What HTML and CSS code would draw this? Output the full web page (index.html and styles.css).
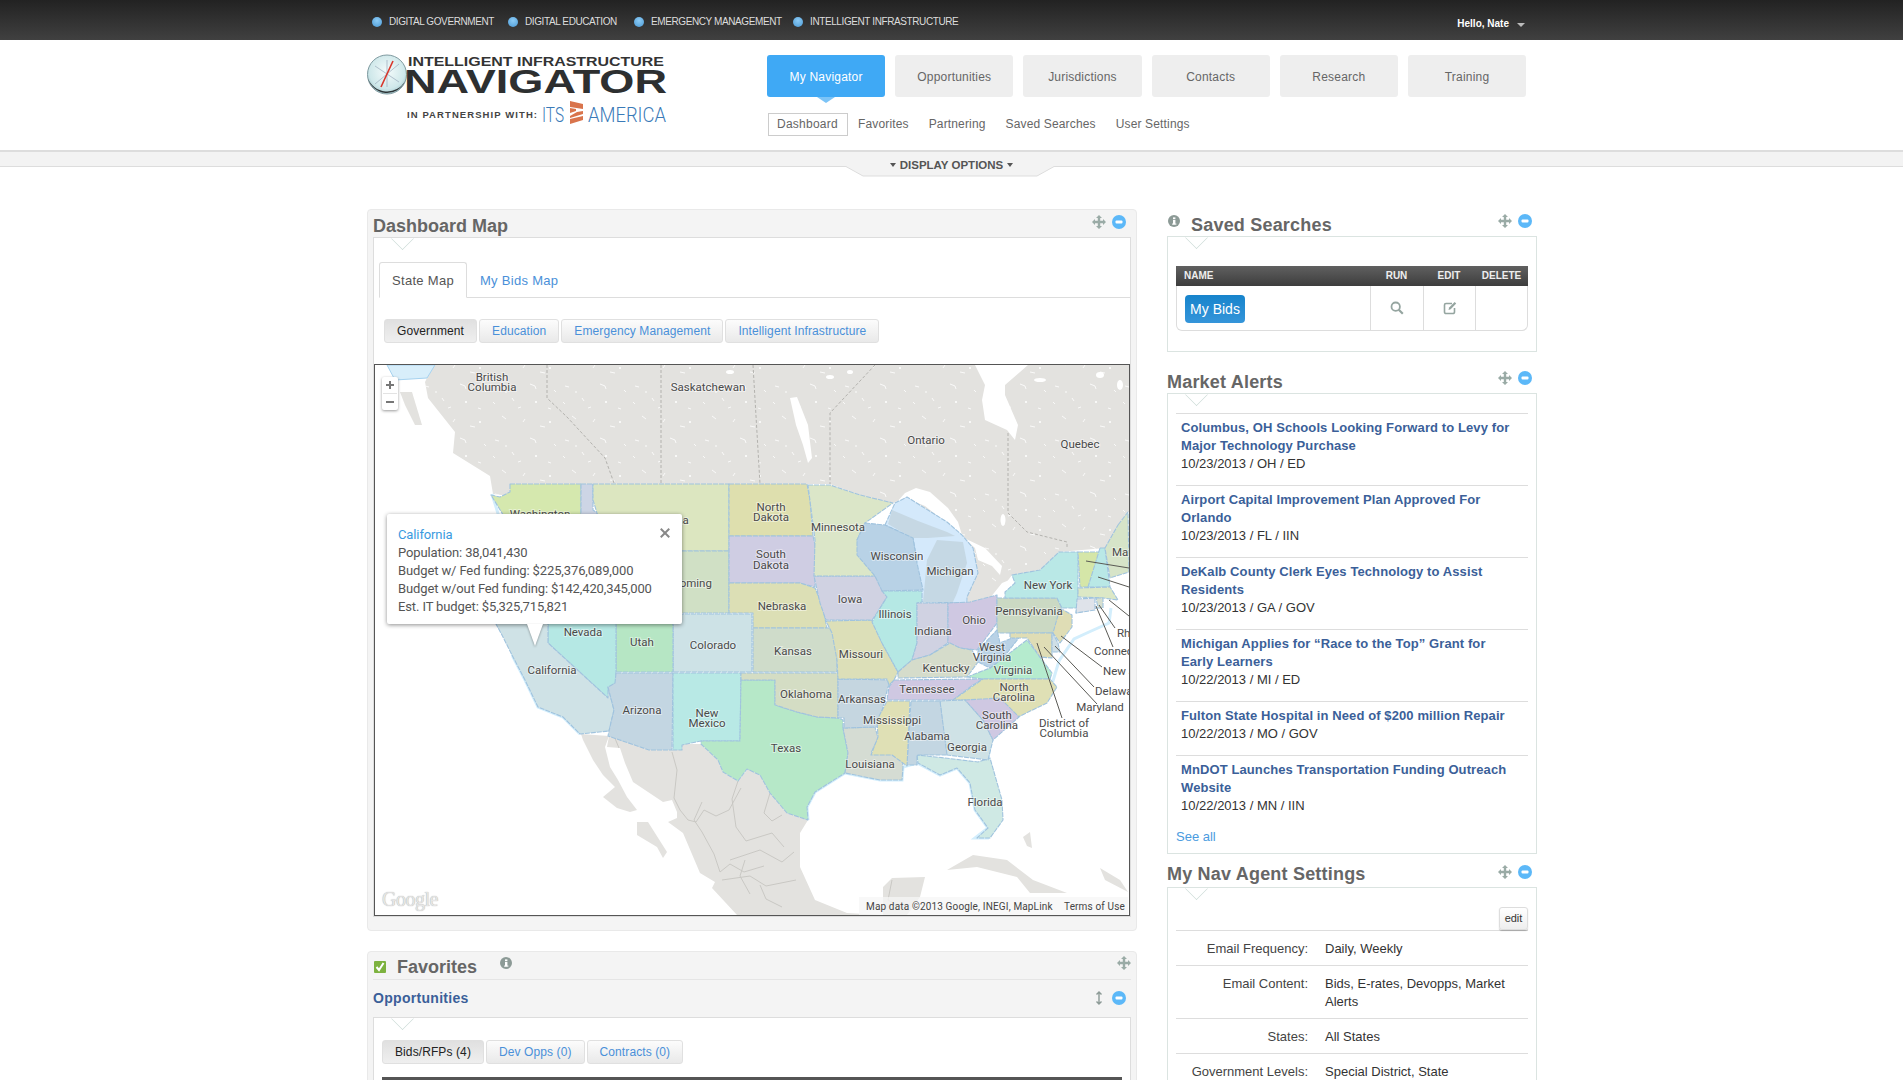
FILE: index.html
```html
<!DOCTYPE html>
<html lang="en">
<head>
<meta charset="utf-8">
<title>Intelligent Infrastructure Navigator</title>
<link rel="stylesheet" href="styles.css">
</head>
<body>
<svg class="defs" width="0" height="0">
  <symbol id="i-move" viewBox="0 0 14 14"><path d="M7 0l3 3H8.2v2.8H11V4l3 3-3 3V8.2H8.2V11H10l-3 3-3-3h1.8V8.2H3V10L0 7l3-3v1.8h2.8V3H4z" fill="#9aaba6"/></symbol>
  <symbol id="i-minus" viewBox="0 0 14 14"><circle cx="7" cy="7" r="7" fill="#5cb8f8"/><rect x="3.5" y="5.5" width="7" height="3" rx="1" fill="#fff"/></symbol>
  <symbol id="i-info" viewBox="0 0 14 14"><circle cx="7" cy="7" r="6" fill="#8c9a96"/><rect x="6" y="6" width="2.4" height="4.4" fill="#fff"/><rect x="6" y="3.4" width="2.4" height="1.8" fill="#fff"/><rect x="5" y="9.6" width="4.4" height="1" fill="#fff"/></symbol>
</svg>

<div class="topbar">
  <div class="topbar-in">
    <ul class="sectors">
      <li class="s1">Digital Government</li>
      <li class="s2">Digital Education</li>
      <li class="s3">Emergency Management</li>
      <li class="s4">Intelligent Infrastructure</li>
    </ul>
    <div class="hello">Hello, Nate<span class="caret"></span></div>
  </div>
</div>

<header class="head">
  <div class="logo">
    <svg width="310" height="80" viewBox="366 52 310 80">
      <defs><radialGradient id="gl" cx=".5" cy=".42" r=".6"><stop offset="0" stop-color="#f4fbfb"/><stop offset=".75" stop-color="#cfe8ea"/><stop offset="1" stop-color="#9fc4ca"/></radialGradient></defs>
      <circle cx="387" cy="74.500" r="19.500" fill="url(#gl)" stroke="#7f9aa0" stroke-width="1"/>
      <path d="M368 78a19.500 19.500 0 0 0 37 3a20 19 0 0 1-37-3z" fill="#2d3436"/>
      <path d="M375 84l24-20M387 60v27M375 66l24 16" stroke="#9ab" stroke-width=".7" fill="none"/>
      <path d="M381 87l12-26" stroke="#d8352a" stroke-width="1.600" fill="none"/>
      <text x="408" y="65.500" class="lg-a" textLength="256" lengthAdjust="spacingAndGlyphs">INTELLIGENT INFRASTRUCTURE</text>
      <text x="404" y="93" class="lg-b" textLength="263" lengthAdjust="spacingAndGlyphs">NAVIGATOR</text>
      <text x="407" y="117.500" class="lg-c" textLength="130" lengthAdjust="spacing">IN PARTNERSHIP WITH:</text>
      <text x="542" y="122" class="lg-d" textLength="22" lengthAdjust="spacingAndGlyphs">ITS</text>
      <path d="M570 101l13 3v5l-13-2zM570 108l6 1v2l-6 2zM577 112l6-1v3l-13 4v-2zM570 119l13-3v4l-13 4z" fill="#d9744c"/>
      <text x="588" y="122" class="lg-d" textLength="78" lengthAdjust="spacingAndGlyphs">AMERICA</text>
    </svg>
  </div>
  <nav class="nav">
    <ul class="main-tabs">
      <li class="on">My Navigator</li>
      <li>Opportunities</li>
      <li>Jurisdictions</li>
      <li>Contacts</li>
      <li>Research</li>
      <li>Training</li>
    </ul>
    <ul class="sub-tabs">
      <li class="on">Dashboard</li>
      <li>Favorites</li>
      <li>Partnering</li>
      <li>Saved Searches</li>
      <li>User Settings</li>
    </ul>
  </nav>
</header>

<div class="band">
  <svg class="band-tab" width="212" height="12" viewBox="0 0 212 12"><path d="M1 0l18 10h174L211 0" fill="#f3f3f3" stroke="#ddd"/></svg>
  <div class="band-label"><span class="tri"></span>DISPLAY OPTIONS<span class="tri"></span></div>
</div>

<main class="page">
  <section class="col-left">
    <div class="panel">
      <div class="phead">
        <h2 class="ptitle">Dashboard Map</h2>
        <div class="ptools"><svg class="ic"><use href="#i-move"/></svg><svg class="ic"><use href="#i-minus"/></svg></div>
      </div>
      <div class="box notch">
        <ul class="tabs">
          <li class="on">State Map</li>
          <li>My Bids Map</li>
        </ul>
        <ul class="pills">
          <li class="on">Government</li>
          <li>Education</li>
          <li>Emergency Management</li>
          <li>Intelligent Infrastructure</li>
        </ul>
        <div class="map">
          <svg class="map-svg" width="754" height="550" viewBox="375 365 754 550">
            <defs>
              <pattern id="speck" width="70" height="54" patternUnits="userSpaceOnUse">
                <path d="M5 8l4 1M22 20l2 3M40 6l5 2 1 3M58 30l3 1M12 38l4 3M33 44l2-3M50 48l5 1M64 12l2 2M28 30l3-1M3 24l2 2" stroke="#fff" stroke-width=".8" fill="none"/>
                <circle cx="46" cy="24" r="1" fill="#fff"/><circle cx="16" cy="14" r=".8" fill="#fff"/><circle cx="60" cy="44" r="1" fill="#fff"/>
              </pattern>
            </defs>
            <rect x="375" y="365" width="754" height="550" fill="#fff"/>
            <g fill="#e3e2df">
              <polygon points="435,365 1131,365 1131,512 1128,512 1118,525 1105,548 1059,552 1040,570 1012,575 997,595 968,603 967,597 978,573 973,548 962,535 947,522 907,497 893,503 860,495 830,484 510,484 510,496 493,494 490,476 453,453 455,432 428,398 425,382 427,378"/>
              <polygon points="400,392 412,392 422,425 415,425 405,405"/>
              <polygon points="581,734 609,736 605,747 610,767 618,780 627,797 637,810 630,812 617,808 603,797 615,787 603,775 593,760 583,740"/>
              <polygon points="637,822 648,822 667,852 663,858 657,847 637,835"/>
              <polygon points="609,736 649,750 682,750 682,744 701,744 718,760 723,772 738,781 748,769 760,775 770,793 787,813 808,820 800,833 800,867 815,900 847,913 883,915 883,887 892,878 925,877 920,897 907,915 737,915 712,888 715,882 700,873 683,833 668,822 677,818 677,812 672,800 663,802 633,782 625,763 620,748 607,747"/>
              <polygon points="947,870 973,855 1007,860 1033,880 1067,893 1030,893 1017,877 977,867"/>
              <polygon points="1023,837 1030,832 1032,848 1027,846"/>
              <polygon points="1100,868 1120,880 1128,892 1105,880"/>
            </g>
            <polygon points="435,365 1131,365 1131,512 1128,512 1118,525 1105,548 1059,552 1040,570 1012,575 997,595 968,603 967,597 978,573 973,548 962,535 947,522 907,497 893,503 860,495 830,484 510,484 510,496 493,494 490,476 453,453 455,432 428,398 425,382 427,378" fill="url(#speck)"/>
            <g fill="#fff">
              <polygon points="975,365 1028,365 1005,385 1005,395 1018,425 1015,440 1007,430 985,420 982,400 985,385"/>
              <polygon points="790,398 797,397 808,425 812,458 808,463 803,445 796,425"/>
              <polygon points="896,503 905,493 916,488 930,492 948,508 958,522 962,535 945,522 925,506 908,499"/>
              <polygon points="964,538 985,548 1002,566 1000,575 992,566 978,560 975,548"/>
              <polygon points="1002,583 1024,574 1030,570 1014,583 998,596 990,598"/>
              <polygon points="906,560 915,545 921,545 922,590 913,590"/>
              <ellipse cx="1003" cy="520" rx="2.500" ry="6"/><ellipse cx="730" cy="372" rx="4" ry="2"/><ellipse cx="830" cy="377" rx="4" ry="2"/><ellipse cx="850" cy="372" rx="3" ry="2"/><ellipse cx="1040" cy="380" rx="6" ry="2"/><ellipse cx="1100" cy="375" rx="4" ry="3"/><ellipse cx="1120" cy="385" rx="3" ry="5"/>
            </g>
            <g fill="none" stroke="#b3b2ae" stroke-width="1" stroke-dasharray="3 2">
              <path d="M547 365v33l20 19 38 41 9 25"/>
              <path d="M661 365v119"/>
              <path d="M753 365l7 119"/>
              <path d="M875 365l-45 48v71"/>
              <path d="M1008 433v80l19 19 40 10v6"/>
            </g>
            <g fill="none" stroke="#c6c5c1" stroke-width=".9">
              <path d="M672 752l5 18-3 28 6 12 8 10 8 2 8-12 12 6 13-6 12-22M702 802l-8 18 8 12 12 22 6 18 10-8 14 8 20-6M738 781l-6 18 4 28 10 14 26-8 12 14M770 793l-6 20 8 8 10-6M730 860l30-10 22 12 12-10M722 880l28-4 16 10 30-6M892 880l-4 20 14 8M614 736l5 12M760 885l6 14 16 8M745 860l-5 16 10 18"/>
            </g>
            <path d="M492 494l8 26 5 100 8 37 12 23 13 27 25 10 17 17M845 773l35 7h22l1-13 14-4 23 12 17-7 13 15 5 27 13 18-13 10 13 0 13-18-1-20-12-42 3-18 26-23 29-20 7-16 6-20 15-22 15-7 20-9 2-15M808 820l-1-13 8-15 30-19" fill="none" stroke="#d3eefc" stroke-width="3"/>
            <polygon points="387,365 435,365 427,378 395,380" fill="#d8eefa" stroke="#a6d2ef"/>
            <g class="states" stroke="#a0c3de" stroke-width="1.100" stroke-linejoin="round" stroke-dasharray="5 1">
              <polygon fill="#d5e8ae" points="510,484 581,484 581,525 520,525 505,518 491,495 500,497 510,492"/>
              <polygon fill="#cdd5e5" points="581,484 593,484 593,510 597,513 610,560 610,620 581,620"/>
              <polygon fill="#dce6c0" points="593,484 729,484 729,551 680,551 610,545 597,513 593,500"/>
              <polygon fill="#d0e0c5" points="640,551 729,551 729,613 640,613"/>
              <polygon fill="#dedfae" points="729,484 807,484 810,500 813,536 729,536"/>
              <polygon fill="#cfcde3" points="729,536 813,536 815,545 815,587 800,583 729,583"/>
              <polygon fill="#dcdfb5" points="729,583 800,583 815,588 822,605 827,628 753,628 753,613 729,613"/>
              <polygon fill="#cfdcca" points="753,628 832,628 837,645 837,672 753,672"/>
              <polygon fill="#cde2e6" points="673,614 752,614 752,672 673,672"/>
              <polygon fill="#b6e6c4" points="616,600 673,600 673,672 616,672"/>
              <polygon fill="#b5e8e4" points="548,600 616,600 616,683 612,685 608,698 548,643"/>
              <polygon fill="#cfe2e6" points="496,600 548,600 548,643 608,698 608,687 614,710 609,731 580,734 563,717 538,707 525,680 513,657 503,637 496,624"/>
              <polygon fill="#c3d6e2" points="616,673 673,673 672,750 649,750 608,736 609,731 614,710 608,687 615,683"/>
              <polygon fill="#b8e9e5" points="673,673 741,673 740,741 701,741 682,745 682,750 673,750"/>
              <polygon fill="#b6e8c8" points="741,680 775,680 775,705 797,712 817,717 838,718 843,720 843,728 848,753 845,773 815,792 807,807 808,820 787,813 770,793 760,775 747,769 738,781 723,772 718,760 701,744 701,741 740,741"/>
              <polygon fill="#d4ddc4" points="741,673 838,673 838,718 817,717 797,712 775,705 775,680 741,680"/>
              <polygon fill="#d5dcd3" points="843,728 875,727 878,738 871,753 902,755 903,767 902,780 880,780 845,773 848,753"/>
              <polygon fill="#c5d6e0" points="838,679 893,680 888,687 883,707 877,727 844,728 844,718 838,718"/>
              <polygon fill="#dcdfb8" points="826,621 872,620 882,643 898,672 894,680 889,685 887,679 838,679 837,660 832,633"/>
              <polygon fill="#d0d2e2" points="814,576 875,576 887,597 877,613 872,620 826,620 820,603"/>
              <polygon fill="#dbe6c8" points="808,485 830,485 860,495 893,503 865,523 857,540 875,576 814,576 815,540"/>
              <polygon fill="#d4e9fb" points="885,525 895,503 907,497 947,522 962,535 973,548 978,573 967,597 967,603 922,602 913,580 917,560 913,538"/>
              <polygon fill="#c6d8e4" stroke="none" points="888,524 892,510 918,521 947,532 955,536 928,538 912,538"/>
              <polygon fill="#c5d8e4" stroke="none" points="927,560 937,540 963,542 967,563 957,593 953,602 923,602"/>
              <polygon fill="#b8d2e6" points="865,523 885,525 913,538 917,563 923,590 882,591 875,576 857,555 857,540"/>
              <polygon fill="#b5e8e4" points="882,591 922,591 922,602 917,603 917,643 912,660 898,672 882,643 872,622 877,613 887,597"/>
              <polygon fill="#d0d2e2" points="917,603 948,603 948,643 930,655 912,660 917,643"/>
              <polygon fill="#cfc8e2" points="948,603 970,602 997,595 997,623 977,650 960,648 948,643"/>
              <polygon fill="#cbd9c3" points="997,598 1057,598 1062,608 1060,620 1058,633 997,633"/>
              <polygon fill="#dfddb5" points="1060,608 1072,615 1072,627 1060,643 1053,633"/>
              <polygon fill="#b9e8e6" points="1012,575 1040,570 1059,552 1078,552 1078,597 1076,613 1097,608 1062,608 1057,598 1005,598 1005,592 1015,583"/>
              <polygon fill="#d5e6a8" points="1078,552 1100,552 1097,587 1080,587"/>
              <polygon fill="#b9e8e6" points="1100,548 1105,548 1110,587 1088,587"/>
              <polygon fill="#d6e4c8" points="1118,525 1128,512 1129,572 1110,578 1105,548"/>
              <polygon fill="#dce8c6" points="1078,588 1110,587 1118,600 1103,598 1078,597"/>
              <polygon fill="#dfe3ea" points="1077,599 1095,598 1095,610 1076,613"/>
              <polygon fill="#d6dfd0" points="1096,598 1103,598 1103,608 1098,608"/>
              <polygon fill="#d5dccb" points="898,672 912,660 930,655 950,643 960,648 972,650 978,662 967,677 898,678"/>
              <polygon fill="#cfc8e2" points="894,680 983,679 973,685 953,700 887,700 889,687"/>
              <polygon fill="#b5ebce" points="967,677 990,668 1003,658 1027,640 1052,673 1050,679 983,679"/>
              <polygon fill="#b9d2e6" points="978,650 997,630 1000,643 1022,634 1003,658 990,668 978,662"/>
              <polygon fill="#dfddb5" points="1010,633 1052,633 1052,658 1040,657 1027,638 1010,638"/>
              <polygon fill="#cfdfe6" points="1052,632 1058,643 1060,652 1052,652"/>
              <polygon fill="#dfe0b5" points="983,679 1050,679 1057,687 1047,703 1018,717 1000,702 965,700 953,700"/>
              <polygon fill="#cfe9e4" points="917,755 918,763 940,775 957,768 970,783 975,810 988,828 977,838 990,838 1003,820 1002,800 990,758 978,762 945,758"/>
              <polygon fill="#cfe2e6" points="940,701 965,700 983,720 993,740 988,760 947,755 945,747"/>
              <polygon fill="#cfc8e2" points="965,700 1000,698 1019,717 993,740 983,720"/>
              <polygon fill="#c3d6e2" points="911,701 940,701 947,755 917,755 917,765 907,765"/>
              <polygon fill="#dfe0b5" points="887,701 910,701 907,766 892,755 871,755 878,737 877,720"/>
            </g>
            <g class="leaders" stroke="#5a5a55" stroke-width="1" fill="none">
              <path d="M1086 561l43 7M1098 577l31 10M1109 600l20 16M1099 605l16 23M1096 606l17 41M1061 636l41 31M1055 646l39 41M1044 647l53 57M1037 643l25 75"/>
            </g>
            <g class="labels">
              <text x="492" y="377">British</text><text x="492" y="387">Columbia</text>
              <text x="708" y="387">Saskatchewan</text><text x="926" y="440">Ontario</text><text x="1080" y="444">Quebec</text>
              <text x="540" y="514">Washington</text><text x="666" y="520">Montana</text><text x="688" y="583">Wyoming</text>
              <text x="583" y="632">Nevada</text><text x="642" y="642">Utah</text><text x="713" y="645">Colorado</text><text x="552" y="670">California</text>
              <text x="642" y="710">Arizona</text><text x="707" y="713">New</text><text x="707" y="723">Mexico</text>
              <text x="771" y="507">North</text><text x="771" y="517">Dakota</text><text x="771" y="554">South</text><text x="771" y="565">Dakota</text>
              <text x="782" y="606">Nebraska</text><text x="793" y="651">Kansas</text><text x="806" y="694">Oklahoma</text><text x="786" y="748">Texas</text>
              <text x="838" y="527">Minnesota</text><text x="897" y="556">Wisconsin</text><text x="950" y="571">Michigan</text><text x="850" y="599">Iowa</text>
              <text x="895" y="614">Illinois</text><text x="933" y="631">Indiana</text><text x="974" y="620">Ohio</text><text x="1029" y="611">Pennsylvania</text>
              <text x="1048" y="585">New York</text><text x="861" y="654">Missouri</text><text x="946" y="668">Kentucky</text><text x="992" y="647">West</text><text x="992" y="657">Virginia</text>
              <text x="1013" y="670">Virginia</text><text x="927" y="689">Tennessee</text><text x="1014" y="687">North</text><text x="1014" y="697">Carolina</text>
              <text x="862" y="699">Arkansas</text><text x="892" y="720">Mississippi</text><text x="927" y="736">Alabama</text><text x="997" y="715">South</text><text x="997" y="725">Carolina</text>
              <text x="967" y="747">Georgia</text><text x="870" y="764">Louisiana</text><text x="985" y="802">Florida</text>
              <text x="1100" y="707">Maryland</text><text x="1064" y="723">District of</text><text x="1064" y="733">Columbia</text>
              <text class="st" x="1112" y="552">Maine</text><text class="st" x="1117" y="633">Rhode Island</text><text class="st" x="1094" y="651">Connecticut</text><text class="st" x="1103" y="671">New Jersey</text><text class="st" x="1095" y="691">Delaware</text>
            </g>
          </svg>
          <div class="zoomctl"><span class="z-plus"></span><span class="z-minus"></span></div>
          <div class="gmark">Google</div>
          <div class="attrib"><span>Map data ©2013 Google, INEGI, MapLink</span><span>Terms of Use</span></div>
          <div class="popup">
            <span class="pop-x"></span>
            <a class="pop-t">California</a>
            <p>Population: 38,041,430</p>
            <p>Budget w/ Fed funding: $225,376,089,000</p>
            <p>Budget w/out Fed funding: $142,420,345,000</p>
            <p>Est. IT budget: $5,325,715,821</p>
          </div>
        </div>
      </div>
    </div>

    <div class="panel fav">
      <div class="fav-head">
        <svg class="check" width="12" height="12" viewBox="0 0 12 12"><rect width="12" height="12" rx="1" fill="#7db23f"/><path d="M2.500 6l2.500 3 4.500-7" stroke="#fff" stroke-width="2" fill="none"/></svg>
        <h2 class="ptitle fav-t">Favorites</h2>
        <svg class="ic fav-i"><use href="#i-info"/></svg>
        <svg class="ic fav-m"><use href="#i-move"/></svg>
      </div>
      <div class="fav-sub">
        <h3>Opportunities</h3>
        <div class="ptools">
          <svg class="ic" viewBox="0 0 14 14"><path d="M7 1v12M4.500 3.500L7 1l2.500 2.500M4.500 10.500L7 13l2.500-2.500" stroke="#8c9a96" stroke-width="1.400" fill="none"/></svg>
          <svg class="ic"><use href="#i-minus"/></svg>
        </div>
      </div>
      <div class="box notch fav-box">
        <ul class="pills">
          <li class="on">Bids/RFPs (4)</li>
          <li>Dev Opps (0)</li>
          <li>Contracts (0)</li>
        </ul>
        <div class="fav-table"></div>
      </div>
    </div>
  </section>

  <aside class="col-right">
    <div class="rhead">
      <svg class="ic r-info"><use href="#i-info"/></svg>
      <h2 class="ptitle r-t">Saved Searches</h2>
      <div class="ptools"><svg class="ic"><use href="#i-move"/></svg><svg class="ic"><use href="#i-minus"/></svg></div>
    </div>
    <div class="rbox notch saved">
      <div class="st-head"><span>NAME</span><span class="c">RUN</span><span class="c">EDIT</span><span class="c">DELETE</span></div>
      <div class="st-row">
        <div class="cell-n"><span class="btn-blue">My Bids</span></div>
        <div class="cell"><svg width="14" height="14" viewBox="0 0 14 14"><circle cx="5.700" cy="5.700" r="4.200" fill="none" stroke="#95a5a0" stroke-width="1.800"/><path d="M8.800 8.800l4 4" stroke="#95a5a0" stroke-width="2.200"/></svg></div>
        <div class="cell"><svg width="14" height="14" viewBox="0 0 14 14"><path d="M9 2.500H3a1.500 1.500 0 0 0-1.500 1.500v7A1.500 1.500 0 0 0 3 12.500h7a1.500 1.500 0 0 0 1.500-1.500V7" fill="none" stroke="#95a5a0" stroke-width="1.600"/><path d="M5.500 9l.6-2.400L11.600 1l1.600 1.600-5.500 5.700z" fill="#95a5a0"/></svg></div>
        <div class="cell"></div>
      </div>
    </div>

    <div class="rhead mt13">
      <h2 class="ptitle">Market Alerts</h2>
      <div class="ptools"><svg class="ic"><use href="#i-move"/></svg><svg class="ic"><use href="#i-minus"/></svg></div>
    </div>
    <div class="rbox notch alerts">
      <article class="alert"><a>Columbus, OH Schools Looking Forward to Levy for Major Technology Purchase</a><p>10/23/2013 / OH / ED</p></article>
      <article class="alert"><a>Airport Capital Improvement Plan Approved For Orlando</a><p>10/23/2013 / FL / IIN</p></article>
      <article class="alert"><a>DeKalb County Clerk Eyes Technology to Assist Residents</a><p>10/23/2013 / GA / GOV</p></article>
      <article class="alert"><a>Michigan Applies for “Race to the Top” Grant for Early Learners</a><p>10/22/2013 / MI / ED</p></article>
      <article class="alert"><a>Fulton State Hospital in Need of $200 million Repair</a><p>10/22/2013 / MO / GOV</p></article>
      <article class="alert"><a>MnDOT Launches Transportation Funding Outreach Website</a><p>10/22/2013 / MN / IIN</p></article>
      <a class="seeall">See all</a>
    </div>

    <div class="rhead mt5">
      <h2 class="ptitle up2">My Nav Agent Settings</h2>
      <div class="ptools"><svg class="ic"><use href="#i-move"/></svg><svg class="ic"><use href="#i-minus"/></svg></div>
    </div>
    <div class="rbox notch agent">
      <div class="edit-row"><span class="btn-edit">edit</span></div>
      <dl class="kv"><dt>Email Frequency:</dt><dd>Daily, Weekly</dd></dl>
      <dl class="kv"><dt>Email Content:</dt><dd>Bids, E-rates, Devopps, Market Alerts</dd></dl>
      <dl class="kv"><dt>States:</dt><dd>All States</dd></dl>
      <dl class="kv"><dt>Government Levels:</dt><dd>Special District, State</dd></dl>
    </div>
  </aside>
</main>
</body>
</html>
```

FILE: styles.css
```css
* { box-sizing: border-box; }
html, body { margin: 0; padding: 0; height: 1080px; overflow: hidden; background: #fff; }
body { font-family: "Liberation Sans", Arial, sans-serif; font-size: 12px; color: #333; width: 1903px; }
ul { list-style: none; margin: 0; padding: 0; }
h2, h3, p, dl, dd { margin: 0; }
.defs { position: absolute; }

.topbar { height: 40px; background: linear-gradient(#222, #404040); }
.topbar-in { margin-left: 371px; width: 1166px; height: 40px; display: flex; justify-content: space-between; align-items: center; }
.sectors { display: flex; }
.sectors li { color: #ddd; font-size: 10px; letter-spacing: -.4px; text-transform: uppercase; padding-left: 18px; position: relative; line-height: 12px; margin-top: 3px; }
.sectors li::before { content: ""; position: absolute; left: 1px; top: 1px; width: 10px; height: 10px; border-radius: 50%; background: radial-gradient(circle at 50% 35%, #8ccbf5, #4b9ad6); }
.sectors .s1 { width: 136px; }
.sectors .s2 { width: 126px; }
.sectors .s3 { width: 159px; }
.hello { color: #fff; font-weight: bold; font-size: 10px; margin: 6px 12px 0 0; display: flex; align-items: center; }
.caret { width: 0; height: 0; border: 4px solid transparent; border-top-color: #bbb; border-bottom: 0; margin-left: 8px; margin-top: 3px; }

.head { height: 110px; display: flex; padding-left: 367px; }
.logo { width: 400px; padding-top: 12px; }
.logo svg { display: block; margin-left: -1px; }
.lg-a { font: bold 12px "Liberation Sans", sans-serif; fill: #333; }
.lg-b { font: bold 34px "Liberation Sans", sans-serif; fill: #2d2f30; }
.lg-c { font: bold 9.500px "Liberation Sans", sans-serif; fill: #444; }
.lg-d { font: 300 20px Roboto, sans-serif; fill: #3a7ab8; }
.nav { padding-top: 15px; }
.main-tabs { display: flex; gap: 10px; }
.main-tabs li { width: 118.200px; height: 42px; line-height: 44px; text-align: center; background: #eee; border-radius: 3px; color: #666; letter-spacing: .2px; position: relative; }
.main-tabs li.on { background: #3fa9f5; color: #fff; }
.main-tabs li.on::after { content: ""; position: absolute; left: 50%; bottom: -6px; margin-left: -9px; border: 9px solid transparent; border-top: 6px solid #7cc4f7; border-bottom: 0; }
.sub-tabs { display: flex; margin-top: 16px; margin-left: 1px; gap: 20px; }
.sub-tabs li { height: 23px; line-height: 23px; color: #666; letter-spacing: .15px; }
.sub-tabs li.on { border: 1px solid #ccc; padding: 0 9px 0 8px; line-height: 21px; margin-right: -10px; letter-spacing: .25px; }

.band { height: 17px; border-top: 2px solid #ddd; border-bottom: 1px solid #ddd; background: #f3f3f3; position: relative; }
.band-tab { position: absolute; left: 844px; top: 14px; }
.band-label { position: absolute; left: 845px; width: 213px; top: 5px; font-weight: bold; font-size: 11.500px; line-height: 16px; color: #555; text-align: center; }
.tri { display: inline-block; width: 0; height: 0; border: 3px solid transparent; border-top: 4px solid #555; border-bottom: 0; margin: 0 4px; vertical-align: 2px; }

.page { display: flex; gap: 30px; padding: 42px 0 0 367px; }
.col-left { width: 770px; }
.col-right { width: 370px; margin-top: -1px; }
.panel { background: #f4f4f4; border: 1px solid #e9e9e9; border-radius: 4px; padding: 0 5px 13px; }
.phead { height: 27px; display: flex; justify-content: space-between; align-items: flex-end; padding-right: 5px; }
.ptitle { font-size: 18px; font-weight: bold; color: #666; line-height: 22px; }
.ptools { display: flex; gap: 6px; align-self: flex-start; margin-top: 5px; }
.ic { width: 14px; height: 14px; display: block; }
.box { background: #fff; border: 1px solid #ddd; position: relative; padding-top: 24px; }
.notch::before { content: ""; position: absolute; left: 20px; top: -8px; width: 16px; height: 16px; background: #fff; border-right: 1px solid #d3e0dc; border-bottom: 1px solid #d3e0dc; transform: rotate(45deg); clip-path: polygon(100% 0, 100% 100%, 0 100%); }

.tabs { display: flex; height: 36px; border-bottom: 1px solid #ddd; margin-left: 5px; }
.tabs li { height: 36px; line-height: 35px; padding: 0 12px; font-size: 13px; color: #4a90d9; letter-spacing: .3px; border: 1px solid transparent; }
.tabs li.on { color: #555; border-color: #ddd; border-bottom-color: #fff; border-radius: 3px 3px 0 0; background: #fff; }

.pills { display: flex; gap: 2px; margin: 21px 0 0 10px; }
.pills li { height: 24px; line-height: 22px; padding: 0 12px; border: 1px solid #e0e0e0; border-radius: 3px; background: linear-gradient(#fcfcfc, #e9e9e9); color: #4a90d9; letter-spacing: .1px; }
.pills li.on { color: #222; background: linear-gradient(#e0e0e0, #efefef); }

.map { position: relative; margin-top: 21px; height: 552px; border: 1px solid #555; width: 756px; overflow: hidden; }
.map-svg { display: block; }
.labels text { font: 11.500px Roboto, sans-serif; fill: #4a4a4a; text-anchor: middle; dominant-baseline: central; paint-order: stroke; stroke: rgba(255,255,255,.45); stroke-width: 2px; }
.labels text.st { text-anchor: start; }
.zoomctl { position: absolute; left: 7px; top: 12px; width: 16px; height: 33px; background: #fff; border-radius: 2px; box-shadow: 0 1px 3px rgba(0,0,0,.4); }
.z-plus, .z-minus { position: absolute; left: 4px; width: 8px; height: 2px; background: #777; }
.z-plus { top: 7px; }
.z-plus::after { content: ""; position: absolute; left: 3px; top: -3px; width: 2px; height: 8px; background: #777; }
.z-minus { top: 24px; }
.z-minus::before { content: ""; position: absolute; left: -3px; top: -8px; width: 14px; height: 1px; background: #e3e3e3; }
.gmark { position: absolute; left: 7px; bottom: 4px; font: 20px "Liberation Serif", serif; letter-spacing: -.5px; color: #e6e6e6; text-shadow: 0 0 1px #999; }
.attrib { position: absolute; right: 1px; bottom: 0; height: 18px; width: 269px; display: flex; justify-content: space-between; align-items: center; gap: 4px; padding: 0 3px 0 7px; background: rgba(245,245,245,.75); font: 10px Roboto, sans-serif; letter-spacing: .15px; color: #444; }
.popup { position: absolute; left: 12px; top: 149px; width: 295px; height: 110px; background: #fff; border-radius: 2px; box-shadow: 0 1px 4px rgba(0,0,0,.45); padding: 12px 11px 0; font: 13px/18px Roboto, sans-serif; letter-spacing: -.12px; color: #555; }
.popup::after { content: ""; position: absolute; left: 140px; top: 110px; border: 8px solid transparent; border-top: 22px solid #fff; border-bottom: 0; filter: drop-shadow(0 1px 1px rgba(0,0,0,.35)); }
.pop-t { display: block; color: #3a9ae0; }
.pop-x { position: absolute; left: 271px; top: 13px; width: 14px; height: 14px; }
.pop-x::before, .pop-x::after { content: ""; position: absolute; left: 6px; top: 0; width: 2px; height: 12px; background: #888; }
.pop-x::before { transform: rotate(45deg); }
.pop-x::after { transform: rotate(-45deg); }

.fav { margin-top: 20px; }
.fav-head { height: 28px; display: flex; align-items: center; border-bottom: 1px solid #e5e5e5; position: relative; padding-top: 2px; }
.fav-t { margin-left: 11px; }
.fav-i { margin: -8px 0 0 22px; }
.fav-m { margin: -7px 0 0 auto; }
.check { margin-left: 1px; }
.fav-sub { height: 37px; display: flex; justify-content: space-between; align-items: center; padding-right: 5px; }
.fav-sub h3 { font-size: 14px; font-weight: bold; color: #3b5f99; letter-spacing: .3px; margin-top: -2px; }
.fav-sub .ptools { align-self: center; margin-top: -2px; }
.fav-box { height: 300px; padding-top: 1px; }
.fav-box .pills { margin: 21px 0 0 8px; }
.fav-table { margin: 13px 8px 0 8px; height: 30px; background: #555; }

.rhead { height: 28px; display: flex; align-items: flex-end; padding-right: 5px; }
.rhead .ptools { margin-left: auto; margin-top: 6px; }
.mt13 { margin-top: 13px; }
.mt5 { margin-top: 5px; }
.up2 { margin-bottom: 2px; }
.r-info { align-self: flex-start; margin: 6px 0 0 0; }
.rhead .ptitle { letter-spacing: .2px; }
.rhead .r-t { margin-left: 10px; }
.rbox { border: 1px solid #dbe4e1; position: relative; background: #fff; padding: 19px 8px; }
.saved { padding-top: 29px; padding-bottom: 19px; height: 116px; }
.st-head { display: grid; grid-template-columns: 194px 53px 52px 53px; height: 20px; line-height: 20px; background: linear-gradient(#606060, #3d3d3d); color: #eee; font-size: 10px; font-weight: bold; }
.st-head span:first-child { padding-left: 8px; }
.st-head .c { text-align: center; }
.st-row { display: grid; grid-template-columns: 193px 53px 52px 52px; height: 45px; border: 1px solid #ddd; border-top: 0; border-radius: 0 0 6px 6px; }
.cell-n { padding: 9px 0 0 8px; }
.cell { border-left: 1px solid #ddd; display: flex; align-items: center; justify-content: center; }
.btn-blue { display: block; width: 60px; height: 28px; line-height: 28px; text-align: center; border-radius: 4px; color: #fff; font-size: 14px; background: linear-gradient(#1784cc, #3595da); }

.alerts { height: 461px; }
.alert { border-top: 1px solid #ddd; padding: 5px 15px 12px 5px; font-size: 13px; line-height: 18px; }
.alert a { display: block; color: #3b5f99; font-weight: bold; letter-spacing: .1px; }
.alert p { color: #333; }
.seeall { display: block; color: #4a9be0; font-size: 13px; line-height: 18px; margin-top: 1px; }

.agent { padding-bottom: 0; }
.edit-row { display: flex; justify-content: flex-end; height: 23px; }
.btn-edit { width: 29px; height: 23px; line-height: 21px; text-align: center; font-size: 11px; color: #333; border: 1px solid #ddd; border-radius: 3px; background: linear-gradient(#fff, #eee); box-shadow: 0 1px 1px rgba(0,0,0,.25); }
.kv { display: grid; grid-template-columns: 132px 1fr; column-gap: 17px; border-top: 1px solid #ddd; padding: 9px 0 7px; font-size: 13px; line-height: 18px; }
.kv dt { text-align: right; color: #444; }
.kv dd { color: #333; padding-right: 5px; }
```
